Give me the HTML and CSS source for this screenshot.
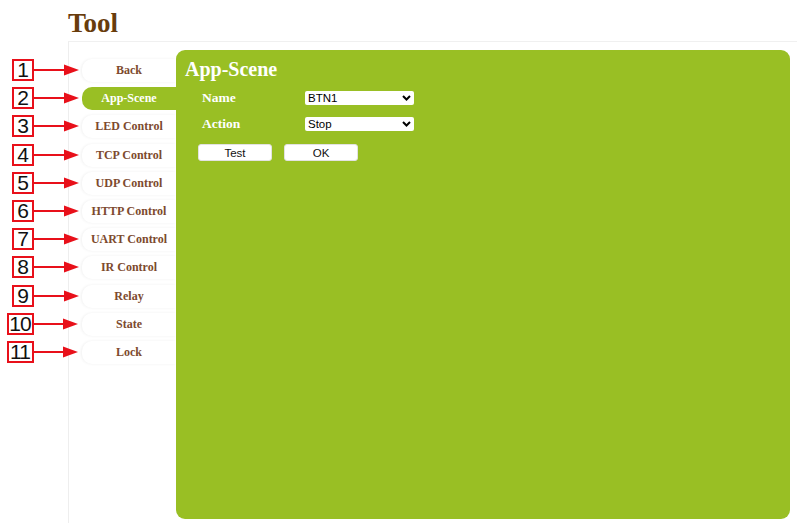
FILE: index.html
```html
<!DOCTYPE html>
<html>
<head>
<meta charset="utf-8">
<title>Tool</title>
<link rel="stylesheet" href="styles.css">
</head>
<body>
<header class="header"><h1 class="title">Tool</h1></header>
<div class="main">
  <div class="notes">
    <div class="note"><span class="box">1</span><svg class="arrow" width="46" height="12" viewBox="0 0 46 12"><line x1="0" y1="6" x2="32" y2="6" stroke="#e8101a" stroke-width="2"/><polygon points="30,0.5 45,6 30,11.5" fill="#e8101a"/></svg></div>
    <div class="note"><span class="box">2</span><svg class="arrow" width="46" height="12" viewBox="0 0 46 12"><line x1="0" y1="6" x2="32" y2="6" stroke="#e8101a" stroke-width="2"/><polygon points="30,0.5 45,6 30,11.5" fill="#e8101a"/></svg></div>
    <div class="note"><span class="box">3</span><svg class="arrow" width="46" height="12" viewBox="0 0 46 12"><line x1="0" y1="6" x2="32" y2="6" stroke="#e8101a" stroke-width="2"/><polygon points="30,0.5 45,6 30,11.5" fill="#e8101a"/></svg></div>
    <div class="note"><span class="box">4</span><svg class="arrow" width="46" height="12" viewBox="0 0 46 12"><line x1="0" y1="6" x2="32" y2="6" stroke="#e8101a" stroke-width="2"/><polygon points="30,0.5 45,6 30,11.5" fill="#e8101a"/></svg></div>
    <div class="note"><span class="box">5</span><svg class="arrow" width="46" height="12" viewBox="0 0 46 12"><line x1="0" y1="6" x2="32" y2="6" stroke="#e8101a" stroke-width="2"/><polygon points="30,0.5 45,6 30,11.5" fill="#e8101a"/></svg></div>
    <div class="note"><span class="box">6</span><svg class="arrow" width="46" height="12" viewBox="0 0 46 12"><line x1="0" y1="6" x2="32" y2="6" stroke="#e8101a" stroke-width="2"/><polygon points="30,0.5 45,6 30,11.5" fill="#e8101a"/></svg></div>
    <div class="note"><span class="box">7</span><svg class="arrow" width="46" height="12" viewBox="0 0 46 12"><line x1="0" y1="6" x2="32" y2="6" stroke="#e8101a" stroke-width="2"/><polygon points="30,0.5 45,6 30,11.5" fill="#e8101a"/></svg></div>
    <div class="note"><span class="box">8</span><svg class="arrow" width="46" height="12" viewBox="0 0 46 12"><line x1="0" y1="6" x2="32" y2="6" stroke="#e8101a" stroke-width="2"/><polygon points="30,0.5 45,6 30,11.5" fill="#e8101a"/></svg></div>
    <div class="note"><span class="box">9</span><svg class="arrow" width="46" height="12" viewBox="0 0 46 12"><line x1="0" y1="6" x2="32" y2="6" stroke="#e8101a" stroke-width="2"/><polygon points="30,0.5 45,6 30,11.5" fill="#e8101a"/></svg></div>
    <div class="note wide"><span class="box">10</span><svg class="arrow" width="45" height="12" viewBox="0 0 45 12"><line x1="0" y1="6" x2="31" y2="6" stroke="#e8101a" stroke-width="2"/><polygon points="29,0.5 44,6 29,11.5" fill="#e8101a"/></svg></div>
    <div class="note wide"><span class="box">11</span><svg class="arrow" width="45" height="12" viewBox="0 0 45 12"><line x1="0" y1="6" x2="31" y2="6" stroke="#e8101a" stroke-width="2"/><polygon points="29,0.5 44,6 29,11.5" fill="#e8101a"/></svg></div>
  </div>
  <div class="frame">
    <nav class="sidebar">
      <a class="item">Back</a>
      <a class="item active">App-Scene</a>
      <a class="item">LED Control</a>
      <a class="item">TCP Control</a>
      <a class="item">UDP Control</a>
      <a class="item">HTTP Control</a>
      <a class="item">UART Control</a>
      <a class="item">IR Control</a>
      <a class="item">Relay</a>
      <a class="item">State</a>
      <a class="item">Lock</a>
    </nav>
    <section class="panel">
      <h2 class="panel-title">App-Scene</h2>
      <div class="form">
        <label class="label">Name</label>
        <select class="select"><option>BTN1</option></select>
        <label class="label">Action</label>
        <select class="select"><option>Stop</option></select>
      </div>
      <div class="buttons">
        <button class="btn">Test</button>
        <button class="btn">OK</button>
      </div>
    </section>
  </div>
</div>
</body>
</html>
```

FILE: styles.css
```css
html, body {
  margin: 0;
  padding: 0;
  background: #ffffff;
  height: 526px;
  overflow: hidden;
}
body {
  font-family: "Liberation Serif", "Times New Roman", serif;
}
.header {
  height: 41px;
  box-sizing: border-box;
  padding: 8px 0 0 68px;
}
.title {
  margin: 0;
  font-size: 27px;
  line-height: 30px;
  font-weight: bold;
  color: #683c0c;
}
.main {
  display: flex;
  height: 485px;
}
.notes {
  position: relative;
  z-index: 1;
  width: 68px;
  flex: none;
  padding-top: 18px;
  box-sizing: border-box;
  display: flex;
  flex-direction: column;
  gap: 6.2px;
}
.note {
  height: 22px;
  display: flex;
  align-items: center;
  padding-left: 12px;
}
.note.wide {
  padding-left: 7px;
}
.box {
  box-sizing: border-box;
  width: 22px;
  height: 22px;
  border: 2px solid #e8101a;
  background: #fff;
  font-family: "Liberation Sans", Arial, sans-serif;
  font-size: 21px;
  line-height: 18px;
  color: #111;
  text-align: center;
  flex: none;
}
.note.wide .box {
  width: 27px;
  letter-spacing: -1px;
  text-indent: -1px;
}
.arrow {
  display: block;
  flex: none;
}
.frame {
  flex: 1;
  display: flex;
  border-top: 1px solid #f0f0f0;
  border-left: 1px solid #eeeeee;
  padding-top: 8px;
  box-sizing: border-box;
  height: 482px;
}
.sidebar {
  width: 107px;
  flex: none;
  box-sizing: border-box;
  padding: 9px 0 0 13px;
  display: flex;
  flex-direction: column;
  gap: 5.2px;
}
.item {
  height: 23px;
  display: flex;
  align-items: center;
  justify-content: center;
  border-radius: 10px 0 0 10px;
  box-shadow: -1px 0 3px rgba(0, 0, 0, 0.06);
  font-size: 12px;
  font-weight: bold;
  color: #7d4a2e;
  background: #fff;
}
.item.active {
  background: #99bf24;
  color: #ffffff;
  box-shadow: none;
}
.panel {
  width: 614px;
  height: 469px;
  flex: none;
  box-sizing: border-box;
  background: #99bf24;
  border-radius: 9px;
  padding: 8px 0 0 9px;
}
.panel-title {
  margin: 0;
  font-size: 20px;
  line-height: 22px;
  font-weight: bold;
  color: #ffffff;
}
.form {
  margin-top: 5px;
  display: grid;
  grid-template-columns: 103px 109px;
  grid-auto-rows: 26px;
  align-items: center;
  padding-left: 17px;
}
.label {
  font-size: 13.5px;
  font-weight: bold;
  color: #ffffff;
}
.select {
  -webkit-appearance: none;
  appearance: none;
  box-sizing: border-box;
  width: 109px;
  height: 14px;
  margin: 0;
  padding: 0 0 0 3px;
  border: none;
  border-radius: 2px;
  background-color: #ffffff;
  background-image: url("data:image/svg+xml;utf8,<svg xmlns='http://www.w3.org/2000/svg' width='9' height='6' viewBox='0 0 9 6'><path d='M1 1 L4.5 4.5 L8 1' fill='none' stroke='black' stroke-width='2'/></svg>");
  background-repeat: no-repeat;
  background-position: right 3px center;
  font-family: "Liberation Sans", Arial, sans-serif;
  font-size: 11.5px;
  line-height: 14px;
  color: #000;
}
.buttons {
  display: flex;
  gap: 12px;
  margin-top: 7px;
  padding-left: 13px;
}
.btn {
  box-sizing: border-box;
  width: 74px;
  height: 17px;
  padding: 0;
  border: 1px solid #e2e2e2;
  border-radius: 3px;
  background: #ffffff;
  font-family: "Liberation Sans", Arial, sans-serif;
  font-size: 11.5px;
  color: #111;
}
```
